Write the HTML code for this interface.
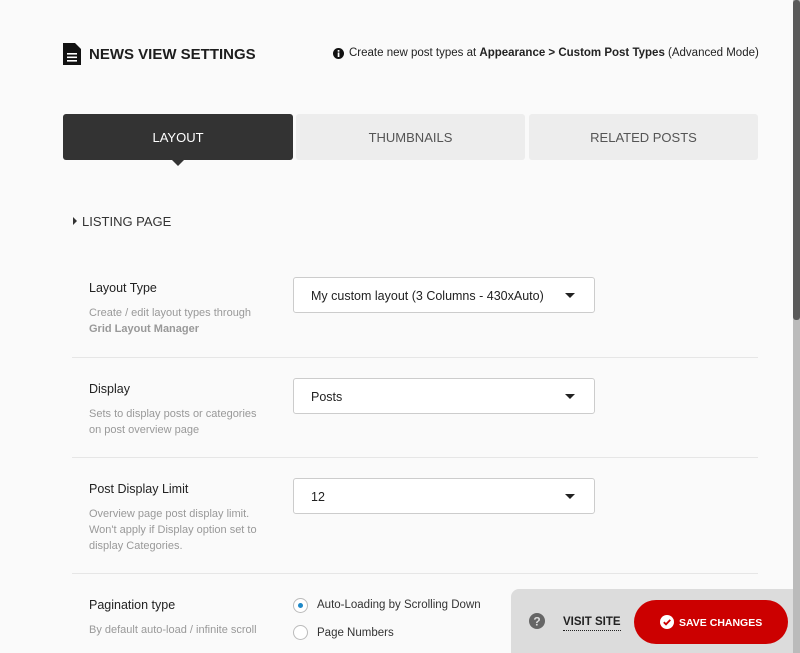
<!DOCTYPE html>
<html><head><style>
*{box-sizing:border-box;margin:0;padding:0}
html,body{width:800px;height:653px;overflow:hidden}
body{background:#fafafa;font-family:"Liberation Sans",sans-serif;color:#222;position:relative}
.abs{position:absolute}
.title{left:89px;top:46px;font-size:15px;font-weight:bold;letter-spacing:0;color:#1e1e1e}
.note{top:47px;font-size:11.5px;color:#222}
.tab{top:114px;height:46px;font-size:13px;display:flex;align-items:center;justify-content:center;color:#555;background:#ededed;border-radius:3px}
.lbl{left:89px;font-size:12.5px;color:#222}
.desc{left:89px;font-size:11px;color:#999;line-height:16px}
.sel{left:293px;width:302px;height:36px;border:1px solid #ccc;border-radius:3px;background:#fff;font-size:12.5px;padding:11px 0 0 17px;color:#222}
.sel:after{content:"";position:absolute;right:19px;top:15px;border-left:5px solid transparent;border-right:5px solid transparent;border-top:5px solid #222}
.hr{left:72px;width:686px;height:1px;background:#e6e6e6}
.radio{left:293px;width:15px;height:15px;border:1px solid #bbb;border-radius:50%;background:#fff}
.rt{left:317px;font-size:11.5px;color:#333}
</style></head><body>
<svg class="abs" style="left:63px;top:43px" width="18" height="22" viewBox="0 0 18 22"><path d="M0 0H12L18 6V22H0Z" fill="#111"/><rect x="4" y="10" width="10" height="1.6" fill="#fff"/><rect x="4" y="13.5" width="10" height="1.6" fill="#fff"/><rect x="4" y="17" width="10" height="1.6" fill="#fff"/></svg>
<div class="abs title">NEWS VIEW SETTINGS</div>
<svg class="abs" style="left:333px;top:48px" width="11" height="11"><circle cx="5.5" cy="5.5" r="5.5" fill="#111"/><rect x="4.7" y="4.5" width="1.7" height="4.5" fill="#fff"/><rect x="4.7" y="2" width="1.7" height="1.7" fill="#fff"/></svg>
<div class="abs note" style="left:349px">Create new post types at <b>Appearance &gt; Custom Post Types</b> (Advanced Mode)</div>
<div class="abs tab" style="left:63px;width:230px;background:#333;color:#fff">LAYOUT</div>
<div class="abs" style="left:172px;top:160px;border-left:6px solid transparent;border-right:6px solid transparent;border-top:6px solid #333"></div>
<div class="abs tab" style="left:296px;width:229px">THUMBNAILS</div>
<div class="abs tab" style="left:529px;width:229px">RELATED POSTS</div>
<div class="abs" style="left:73px;top:217px;border-top:4px solid transparent;border-bottom:4px solid transparent;border-left:4px solid #333"></div>
<div class="abs" style="left:82px;top:214px;font-size:13px;color:#333">LISTING PAGE</div>

<div class="abs lbl" style="top:281px">Layout Type</div>
<div class="abs desc" style="top:305px">Create / edit layout types through<br><b>Grid Layout Manager</b></div>
<div class="abs sel" style="top:277px">My custom layout (3 Columns - 430xAuto)</div>
<div class="abs hr" style="top:357px"></div>

<div class="abs lbl" style="top:382px">Display</div>
<div class="abs desc" style="top:406px">Sets to display posts or categories<br>on post overview page</div>
<div class="abs sel" style="top:378px">Posts</div>
<div class="abs hr" style="top:457px"></div>

<div class="abs lbl" style="top:482px">Post Display Limit</div>
<div class="abs desc" style="top:506px">Overview page post display limit.<br>Won't apply if Display option set to<br>display Categories.</div>
<div class="abs sel" style="top:478px">12</div>
<div class="abs hr" style="top:573px"></div>

<div class="abs lbl" style="top:598px">Pagination type</div>
<div class="abs desc" style="top:622px">By default auto-load / infinite scroll</div>
<div class="abs radio" style="top:598px"><div style="position:absolute;left:4px;top:4px;width:5px;height:5px;border-radius:50%;background:#1e88c8"></div></div>
<div class="abs rt" style="top:599px">Auto-Loading by Scrolling Down</div>
<div class="abs radio" style="top:625px"></div>
<div class="abs rt" style="top:627px">Page Numbers</div>

<div class="abs" style="left:511px;top:589px;width:289px;height:70px;background:#dcdcdc;border-radius:8px 0 0 0"></div>
<svg class="abs" style="left:529px;top:613px" width="16" height="16"><circle cx="8" cy="8" r="8" fill="#666"/><text x="8" y="12.5" font-size="12" font-weight="bold" fill="#dcdcdc" text-anchor="middle" font-family="Liberation Sans">?</text></svg>
<div class="abs" style="left:563px;top:616px;font-size:11.5px;font-weight:bold;color:#222;border-bottom:1px dotted #222;padding-bottom:2px">VISIT SITE</div>
<div class="abs" style="left:634px;top:600px;width:154px;height:44px;background:#cc0000;border-radius:22px"></div>
<svg class="abs" style="left:660px;top:615px" width="14" height="14"><circle cx="7" cy="7" r="7" fill="#fff"/><path d="M3.8 7.2L6 9.3L10.3 4.9" stroke="#cc0000" stroke-width="1.8" fill="none"/></svg>
<div class="abs" style="left:679px;top:617px;font-size:10.5px;font-weight:bold;color:#fff">SAVE CHANGES</div>

<div class="abs" style="left:793px;top:0;width:7px;height:653px;background:#bbb"></div>
<div class="abs" style="left:793px;top:0;width:7px;height:320px;background:#5a5a5a;border-radius:3px"></div>
</body></html>
